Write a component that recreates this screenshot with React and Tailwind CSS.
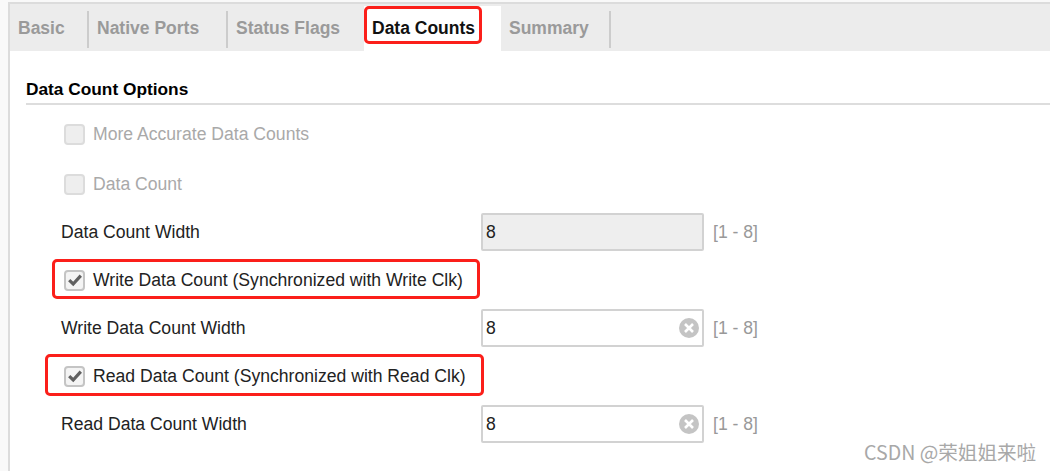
import React from 'react';

const FONT = "font-['Liberation_Sans',Arial,sans-serif]";

const Check = ({ checked, disabled }) => (
  <span className={`flex h-[21px] w-[21px] shrink-0 items-center justify-center rounded-[4px] border-2 ${disabled ? 'border-[#dcdcdc] bg-[#eeeeee]' : 'border-[#c4c4c4] bg-[#f4f4f4]'}`}>
    {checked && (
      <svg viewBox="0 0 16 16" className="h-[16px] w-[16px]">
        <path d="M2.2 8.2 L6.2 12 L13.8 3.6" fill="none" stroke="#606060" strokeWidth="3.2" />
      </svg>
    )}
  </span>
);

const Tab = ({ label, active, className }) => (
  <div className={`flex h-full items-center font-bold text-[17.5px] ${active ? 'bg-white text-[#111111]' : 'text-[#9a9a9a]'} ${className}`}>
    {label}
  </div>
);

const Sep = () => <div className="mt-[1px] h-[37px] w-[2px] bg-[#cccccc]" />;

const CheckRow = ({ label, checked, disabled }) => (
  <div className={`flex h-12 items-center gap-[8px] pl-[54px] text-[17.6px] ${disabled ? 'text-[#a9a9a9]' : 'text-[#222222]'}`}>
    <Check checked={checked} disabled={disabled} />
    <span>{label}</span>
  </div>
);

const Field = ({ label, disabled }) => (
  <div className="flex h-12 items-center pl-[51px] text-[17.6px] text-[#222222]">
    <span className="w-[420px]">{label}</span>
    <div className={`flex h-[38px] w-[223px] items-center justify-between rounded-[2px] border-2 border-[#d2d2d2] pl-[3px] pr-[3px] ${disabled ? 'bg-[#eeeeee]' : 'bg-white'}`}>
      <span>8</span>
      {!disabled && (
        <svg viewBox="0 0 20 20" className="h-5 w-5">
          <circle cx="10" cy="10" r="10" fill="#c4c4c4" />
          <path d="M6 6 L14 14 M14 6 L6 14" stroke="#ffffff" strokeWidth="2.6" />
        </svg>
      )}
    </div>
    <span className="ml-[9px] text-[#999999]">[1 - 8]</span>
  </div>
);

export default function App() {
  return (
    <div className={`relative h-[471px] w-[1050px] overflow-hidden bg-white ${FONT}`}>
      <div className="h-[471px] pl-[8px] pt-[2px] bg-[#f9f9f9]">
        <div className="h-full border-l-2 border-t-2 border-[#dcdcdc] bg-white">
          {/* Tabs */}
          <div className="flex h-[47px] items-center bg-[#ececec] pt-[2px]">
            <Tab label="Basic" className="w-[77px] pl-[8px]" />
            <Sep />
            <Tab label="Native Ports" className="w-[137px] pl-[8px]" />
            <Sep />
            <Tab label="Status Flags" className="w-[136px] pl-[8px]" />
            <Tab label="Data Counts" active className="w-[137px] pl-[8px]" />
            <Tab label="Summary" className="w-[108px] pl-[8px]" />
            <Sep />
          </div>

          {/* Section */}
          <div className="pl-[16px] pt-[26px]">
            <div className="flex h-[28px] items-center border-b-2 border-[#dddddd] text-[17.3px] font-bold text-black">
              Data Count Options
            </div>
          </div>
          <div className="pt-[5px]">
            <CheckRow label="More Accurate Data Counts" disabled />
            <div className="h-[2px]" />
            <CheckRow label="Data Count" disabled />
            <Field label="Data Count Width" disabled />
            <CheckRow label="Write Data Count (Synchronized with Write Clk)" checked />
            <Field label="Write Data Count Width" />
            <CheckRow label="Read Data Count (Synchronized with Read Clk)" checked />
            <Field label="Read Data Count Width" />
          </div>
        </div>
      </div>

      {/* Red call-outs */}
      <div className="absolute left-[364px] top-[6px] h-[38px] w-[118px] rounded-[5px] border-[3px] border-[#fb1f1a]" />
      <div className="absolute left-[52px] top-[259px] h-[40px] w-[428px] rounded-[5px] border-[3px] border-[#fb1f1a]" />
      <div className="absolute left-[45px] top-[354px] h-[42px] w-[439px] rounded-[5px] border-[3px] border-[#fb1f1a]" />

      {/* Watermark */}
      <div className="absolute left-[864px] top-[440px] font-['Noto_Sans_CJK_SC',sans-serif] text-[19.6px] leading-6 text-[#a8a8a8]">
        CSDN @荣姐姐来啦
      </div>
    </div>
  );
}
